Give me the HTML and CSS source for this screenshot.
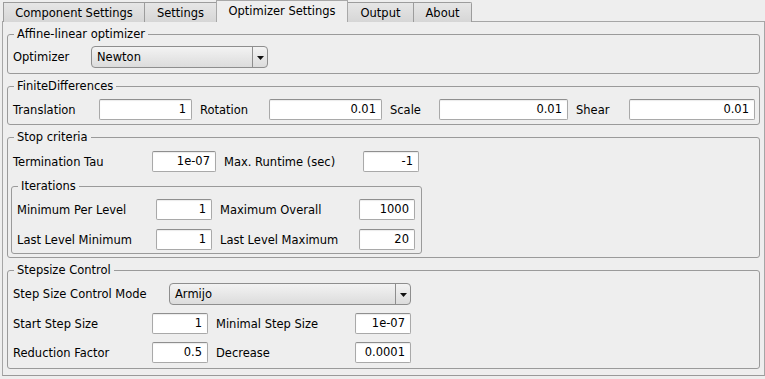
FILE: index.html
```html
<!DOCTYPE html>
<html>
<head>
<meta charset="utf-8">
<link rel="stylesheet" href="styles.css">
</head>
<body>
<div class="window">
  <div class="tabs">
    <div class="tab t1">Component Settings</div>
    <div class="tab t2">Settings</div>
    <div class="tab t3 active">Optimizer Settings</div>
    <div class="tab t4">Output</div>
    <div class="tab t5">About</div>
  </div>
  <div class="panel">
    <div class="group g-affine">
      <span class="legend">Affine-linear optimizer</span>
      <div class="row r-affine">
        <span class="lbl">Optimizer</span>
        <div class="combo"><span class="val">Newton</span><span class="arrow"><svg width="7" height="4" viewBox="0 0 7 4"><polygon points="0,0 7,0 3.5,4" fill="#111"/></svg></span></div>
      </div>
    </div>

    <div class="group g-fd">
      <span class="legend">FiniteDifferences</span>
      <div class="row r-fd">
        <span class="lbl">Translation</span><div class="field">1</div>
        <span class="lbl">Rotation</span><div class="field">0.01</div>
        <span class="lbl">Scale</span><div class="field">0.01</div>
        <span class="lbl">Shear</span><div class="field">0.01</div>
      </div>
    </div>

    <div class="group g-stop">
      <span class="legend">Stop criteria</span>
      <div class="row r-stop">
        <span class="lbl">Termination Tau</span><div class="field">1e-07</div>
        <span class="lbl">Max. Runtime (sec)</span><div class="field">-1</div>
      </div>
      <div class="group g-iter">
        <span class="legend">Iterations</span>
        <div class="row r-iter">
          <span class="lbl">Minimum Per Level</span><div class="field">1</div>
          <span class="lbl">Maximum Overall</span><div class="field">1000</div>
        </div>
        <div class="row r-iter">
          <span class="lbl">Last Level Minimum</span><div class="field">1</div>
          <span class="lbl">Last Level Maximum</span><div class="field">20</div>
        </div>
      </div>
    </div>

    <div class="group g-step">
      <span class="legend">Stepsize Control</span>
      <div class="row r-mode">
        <span class="lbl">Step Size Control Mode</span>
        <div class="combo"><span class="val">Armijo</span><span class="arrow"><svg width="7" height="4" viewBox="0 0 7 4"><polygon points="0,0 7,0 3.5,4" fill="#111"/></svg></span></div>
      </div>
      <div class="row r-step">
        <span class="lbl">Start Step Size</span><div class="field">1</div>
        <span class="lbl">Minimal Step Size</span><div class="field">1e-07</div>
      </div>
      <div class="row r-step">
        <span class="lbl">Reduction Factor</span><div class="field">0.5</div>
        <span class="lbl">Decrease</span><div class="field">0.0001</div>
      </div>
    </div>
  </div>
</div>
</body>
</html>
```

FILE: styles.css
```css
* { box-sizing: border-box; }
html, body {
  margin: 0;
  padding: 0;
  background: #eeeeee;
}
body {
  font-family: "DejaVu Sans", "Liberation Sans", sans-serif;
  font-size: 11.5px;
  color: #000;
  width: 765px;
  height: 379px;
  overflow: hidden;
}
.window {
  padding-left: 2px;
}
.tabs {
  display: flex;
  align-items: flex-end;
  height: 22px;
  padding-left: 1px;
  margin-bottom: -1px;
  position: relative;
  z-index: 1;
}
.tab {
  height: 20px;
  border: 1px solid #9c9c9c;
  border-bottom: none;
  background: linear-gradient(#e6e6e6, #d6d6d6);
  display: flex;
  align-items: center;
  justify-content: center;
  margin-left: -1px;
  padding-top: 1px;
  white-space: nowrap;
}
.tab.t1 { margin-left: 0; width: 142px; }
.tab.t2 { width: 73px; }
.tab.t3 { width: 132px; }
.tab.t4 { width: 67px; }
.tab.t5 { width: 59px; border-top-right-radius: 2px; }
.tab.active {
  height: 22px;
  background: #eeeeee;
  border-color: #a8a8a8;
  position: relative;
  z-index: 2;
  padding-top: 0;
  padding-bottom: 1px;
}
.panel {
  width: 763px;
  height: 355px;
  border: 1px solid #a6a6a6;
  border-bottom-color: #9a9a9a;
  display: flex;
  flex-direction: column;
  gap: 12px;
  padding: 12px 4px 6px 4px;
}
.group {
  position: relative;
  border: 1px solid #9a9a9a;
  border-radius: 3px;
  padding-left: 5px;
}
.legend {
  position: absolute;
  top: -8px;
  left: 6px;
  height: 14px;
  line-height: 14px;
  padding: 0 3px;
  background: #eeeeee;
  white-space: nowrap;
}
.row {
  display: grid;
  column-gap: 8px;
  align-items: center;
}
.lbl { white-space: nowrap; }
.field {
  height: 21px;
  background: #ffffff;
  border: 1px solid #a9a9a9;
  border-top-color: #8f8f8f;
  border-radius: 2px;
  box-shadow: inset 0 1px 1px rgba(0,0,0,0.08);
  text-align: right;
  padding-right: 5px;
  line-height: 19px;
  white-space: nowrap;
}
.combo {
  height: 22px;
  border: 1px solid #8e8e8e;
  border-radius: 4px;
  background: linear-gradient(#f3f3f3, #dcdcdc);
  display: flex;
  align-items: stretch;
}
.combo .val {
  flex: 1;
  padding-left: 5px;
  line-height: 20px;
}
.combo .arrow {
  width: 15px;
  border-left: 1px solid #8e8e8e;
  display: flex;
  align-items: center;
  justify-content: center;
  padding-top: 1px;
}

.g-affine { padding-top: 11px; padding-bottom: 5px; }
.r-affine { grid-template-columns: 70px 177px; }

.g-fd { padding-top: 12px; padding-bottom: 4px; }
.r-fd { grid-template-columns: 78px 93px 61px 113px 41px 129px 45px 126px; }

.g-stop { padding-top: 13px; padding-bottom: 3px; }
.r-stop { grid-template-columns: 131px 64px 131px 56px; }

.g-iter {
  margin-top: 14px;
  margin-left: -2px;
  width: 411px;
  padding-top: 12px;
  padding-bottom: 3px;
  display: flex;
  flex-direction: column;
  gap: 9px;
}
.r-iter { grid-template-columns: 131px 56px 131px 56px; }

.g-step {
  padding-top: 12px;
  padding-bottom: 5px;
  display: flex;
  flex-direction: column;
  gap: 8px;
}
.r-mode { grid-template-columns: 148px 242px; }
.r-step { grid-template-columns: 131px 56px 131px 56px; }
```
